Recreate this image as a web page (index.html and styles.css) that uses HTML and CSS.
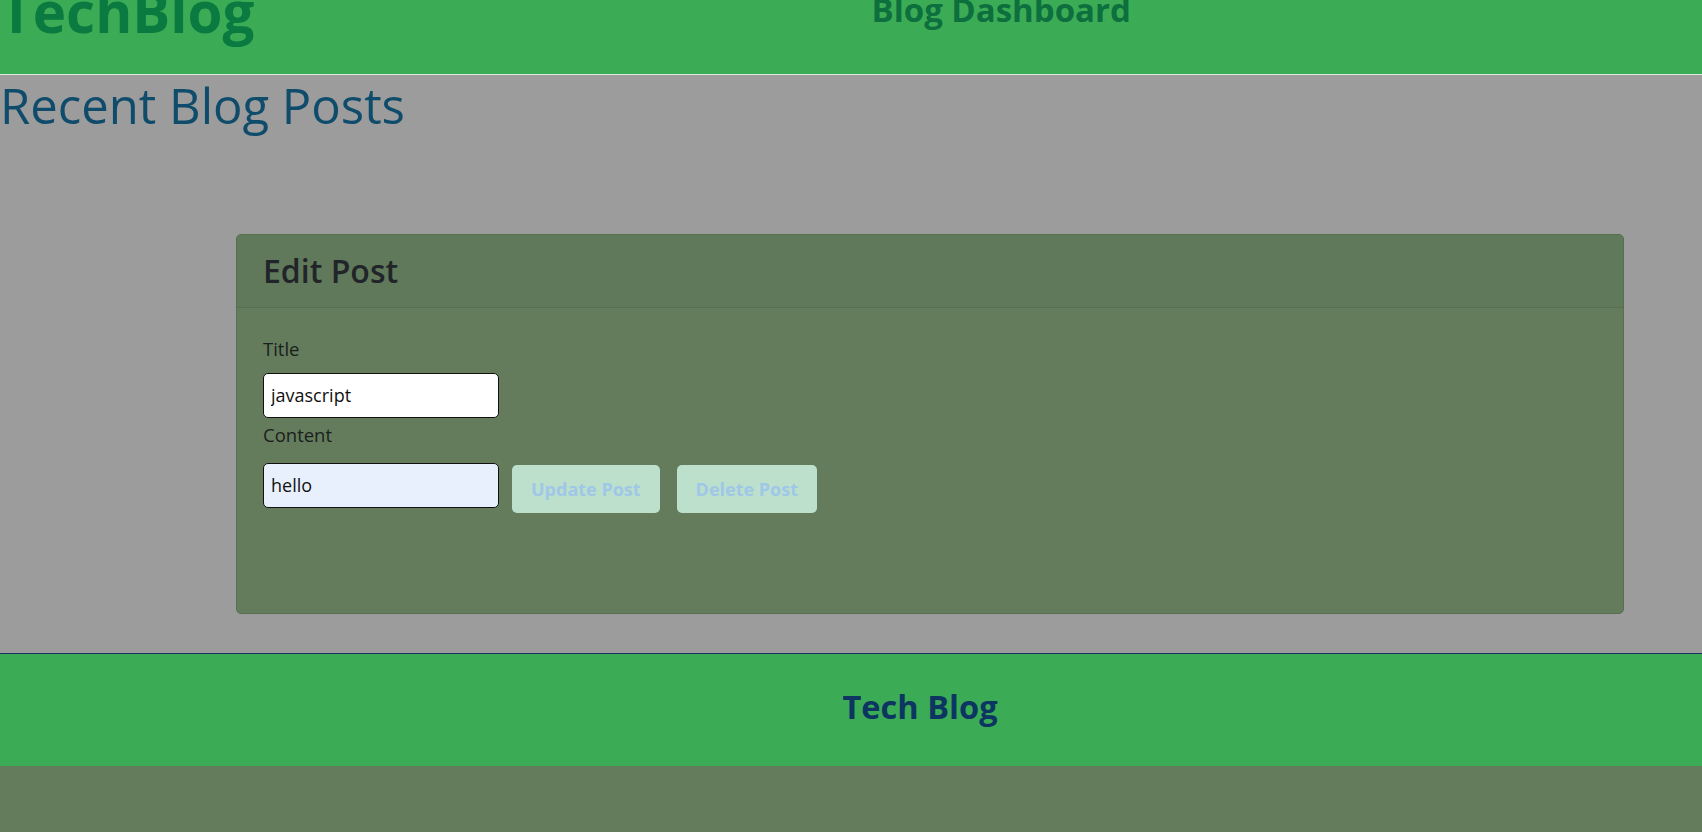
FILE: index.html
```html
<!DOCTYPE html>
<html lang="en">
<head>
<meta charset="utf-8">
<title>TechBlog - Dashboard</title>
<link rel="stylesheet" href="styles.css">
</head>
<body>
<header class="site-header">
  <h1 class="brand">TechBlog</h1>
  <div class="nav-title">Blog Dashboard</div>
</header>
<main class="content">
  <h2 class="page-title">Recent Blog Posts</h2>
  <div class="card-wrap">
    <section class="card">
      <div class="card-header">
        <h3 class="card-title">Edit Post</h3>
      </div>
      <form class="card-body">
        <label class="field-label title-label" for="title">Title</label>
        <input class="field-input" id="title" type="text" value="javascript">
        <label class="field-label content-label" for="content">Content</label>
        <div class="field-row">
          <input class="field-input autofilled" id="content" type="text" value="hello">
          <button class="btn btn-update" type="button">Update Post</button>
          <button class="btn btn-delete" type="button">Delete Post</button>
        </div>
      </form>
    </section>
  </div>
</main>
<footer class="site-footer">
  <div class="footer-title">Tech Blog</div>
</footer>
</body>
</html>
```
FILE: styles.css
```css
html, body {
  margin: 0;
  padding: 0;
}
body {
  background: #647c5c;
  font-family: "Open Sans", "Liberation Sans", sans-serif;
  color: #212529;
}
.site-header {
  display: flex;
  align-items: flex-start;
  height: 74px;
  background: #3bac55;
  border-bottom: 1px solid #d9eedd;
}
.brand {
  margin: -16px 0 0 0;
  font-size: 56.5px;
  line-height: 1;
  font-weight: 700;
  color: #0b7a40;
}
.nav-title {
  flex: 1;
  text-align: center;
  padding-left: 46px;
  margin-top: -7px;
  font-size: 33px;
  line-height: 1;
  font-weight: 700;
  color: #0d6f3e;
}
.content {
  background: #9c9c9c;
  padding-top: 1px;
  padding-bottom: 39px;
}
.page-title {
  margin: 0;
  font-size: 49px;
  line-height: 1.2;
  font-weight: 400;
  color: #0f4c6b;
}
.card-wrap {
  padding: 0 78px 0 236px;
  margin-top: 99px;
}
.card {
  background: #647c5c;
  border: 1px solid #56704f;
  border-radius: 5px;
  overflow: hidden;
}
.card-header {
  background: #60795a;
  border-bottom: 1px solid #56704f;
  padding: 16px 26px 16px;
}
.card-title {
  margin: 0;
  font-size: 32px;
  line-height: 40px;
  font-weight: 600;
  color: #212529;
}
.card-body {
  padding: 28px 26px 100px;
}
.field-label {
  display: block;
  font-size: 18.5px;
  line-height: 26px;
  color: #1a1e1c;
}
.title-label {
  margin-bottom: 11px;
}
.content-label {
  margin-top: 4px;
  margin-bottom: 15px;
}
.field-input {
  display: block;
  box-sizing: border-box;
  width: 236px;
  height: 45px;
  margin: 0;
  padding: 0 7px;
  border: 1px solid #111;
  border-radius: 5px;
  background: #fff;
  font-family: inherit;
  font-size: 18px;
  color: #111;
}
.field-input.autofilled {
  background: #e8f0fe;
}
.field-row {
  display: flex;
  align-items: flex-start;
}
.btn {
  margin-top: 2px;
  height: 48px;
  padding: 0 19px;
  border: none;
  border-radius: 5px;
  background: #bde0cc;
  color: #9fc7e7;
  font-family: inherit;
  font-size: 18px;
  line-height: 48px;
  font-weight: 700;
}
.btn-update {
  margin-left: 13px;
}
.btn-delete {
  margin-left: 17px;
}
.site-footer {
  background: #3bac55;
  border-top: 1px solid #1d2f5c;
  padding: 33px 0 40px 138px;
  text-align: center;
}
.footer-title {
  font-size: 32.6px;
  line-height: 1.2;
  font-weight: 700;
  color: #0c3561;
}
```
